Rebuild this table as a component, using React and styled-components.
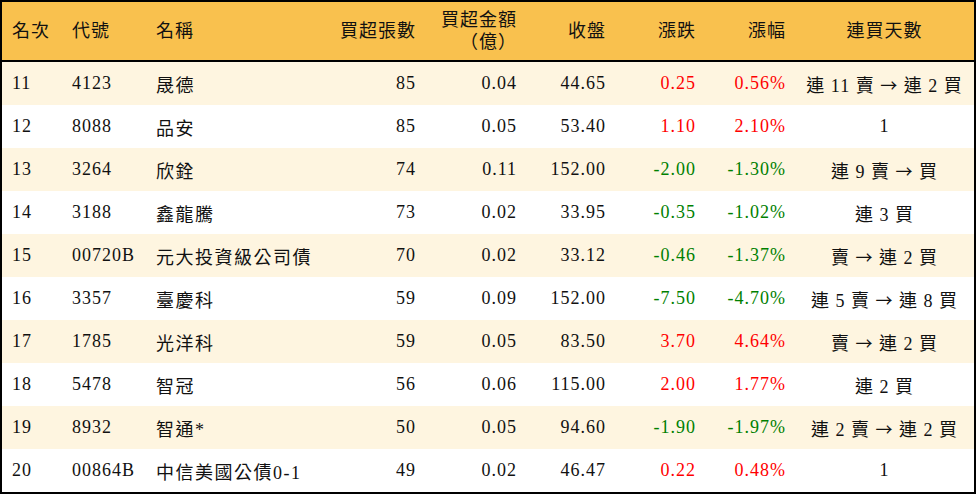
import React from 'react';
import styled, { createGlobalStyle } from 'styled-components';

const GlobalStyle = createGlobalStyle`
  html, body {
    margin: 0;
    padding: 0;
    background: #ffffff;
  }
  body {
    font-family: "Liberation Serif", "Noto Sans CJK TC", serif;
  }
`;

const Table = styled.table`
  width: 976px;
  box-sizing: border-box;
  table-layout: fixed;
  border-collapse: separate;
  border-spacing: 0;
  border: 2px solid #000000;
  font-family: "Liberation Serif", "Noto Sans CJK TC", serif;
  font-size: 18px;
  letter-spacing: 1px;
  color: #111111;
`;

const HeadRow = styled.tr`
  background: #f9c14e;
  height: 60px;
`;

const Th = styled.th`
  box-sizing: border-box;
  width: ${(p) => p.$w}px;
  padding: ${(p) => (p.$align === 'right' ? '0 9px 0 0' : p.$align === 'left' ? '0 0 0 10px' : '0')};
  text-align: ${(p) => p.$align || 'left'};
  font-weight: normal;
  line-height: 22px;
  vertical-align: middle;
  border-bottom: 2px solid #000000;
`;

const Row = styled.tr`
  height: 43px;
  background: ${(p) => (p.$striped ? '#fef5e0' : '#ffffff')};
`;

const Td = styled.td`
  box-sizing: border-box;
  padding: ${(p) => (p.$align === 'right' ? '0 9px 0 0' : p.$align === 'left' ? '0 0 0 10px' : '0')};
  text-align: ${(p) => p.$align || 'left'};
  color: ${(p) => p.$color || '#111111'};
  letter-spacing: ${(p) => p.$spacing || '1px'};
  white-space: nowrap;
  vertical-align: middle;
`;

const Arrow = styled.span`
  font-family: "Noto Sans CJK TC", "DejaVu Sans", sans-serif;
  font-size: 17px;
`;

const columns = [
  { label: '名次', w: 60, align: 'left' },
  { label: '代號', w: 84, align: 'left' },
  { label: '名稱', w: 180, align: 'left', spacing: '1.5px' },
  { label: '買超張數', w: 99, align: 'right' },
  { label: ['買超金額', '（億）'], w: 101, align: 'right' },
  { label: '收盤', w: 89, align: 'right' },
  { label: '漲跌', w: 90, align: 'right' },
  { label: '漲幅', w: 90, align: 'right' },
  { label: '連買天數', w: 179, align: 'center' },
];

const rows = [
  ['11', '4123', '晟德', '85', '0.04', '44.65', '0.25', '0.56%', '連 11 賣 → 連 2 買'],
  ['12', '8088', '品安', '85', '0.05', '53.40', '1.10', '2.10%', '1'],
  ['13', '3264', '欣銓', '74', '0.11', '152.00', '-2.00', '-1.30%', '連 9 賣 → 買'],
  ['14', '3188', '鑫龍騰', '73', '0.02', '33.95', '-0.35', '-1.02%', '連 3 買'],
  ['15', '00720B', '元大投資級公司債', '70', '0.02', '33.12', '-0.46', '-1.37%', '賣 → 連 2 買'],
  ['16', '3357', '臺慶科', '59', '0.09', '152.00', '-7.50', '-4.70%', '連 5 賣 → 連 8 買'],
  ['17', '1785', '光洋科', '59', '0.05', '83.50', '3.70', '4.64%', '賣 → 連 2 買'],
  ['18', '5478', '智冠', '56', '0.06', '115.00', '2.00', '1.77%', '連 2 買'],
  ['19', '8932', '智通*', '50', '0.05', '94.60', '-1.90', '-1.97%', '連 2 賣 → 連 2 買'],
  ['20', '00864B', '中信美國公債0-1', '49', '0.02', '46.47', '0.22', '0.48%', '1'],
];

const changeColor = (v) => (v.startsWith('-') ? '#008000' : '#ff0000');

// 連買天數: the arrow is drawn in the CJK font so it comes out long
const renderStreak = (text) => {
  const parts = text.split('→');
  if (parts.length === 1) return text;
  return (
    <>
      {parts[0]}
      <Arrow>→</Arrow>
      {parts[1]}
    </>
  );
};

const App = () => (
  <>
    <GlobalStyle />
    <Table>
      <thead>
        <HeadRow>
          {columns.map((c, i) => (
            <Th key={i} $w={c.w} $align={c.align}>
              {Array.isArray(c.label) ? (
                <>
                  {c.label[0]}
                  <br />
                  {c.label[1]}
                </>
              ) : (
                c.label
              )}
            </Th>
          ))}
        </HeadRow>
      </thead>
      <tbody>
        {rows.map((r, i) => (
          <Row key={r[0]} $striped={i % 2 === 0}>
            {r.map((cell, j) => (
              <Td
                key={j}
                $align={columns[j].align}
                $spacing={columns[j].spacing}
                $color={j === 6 || j === 7 ? changeColor(r[6]) : undefined}
              >
                {j === 8 ? renderStreak(cell) : cell}
              </Td>
            ))}
          </Row>
        ))}
      </tbody>
    </Table>
  </>
);

export default App;
